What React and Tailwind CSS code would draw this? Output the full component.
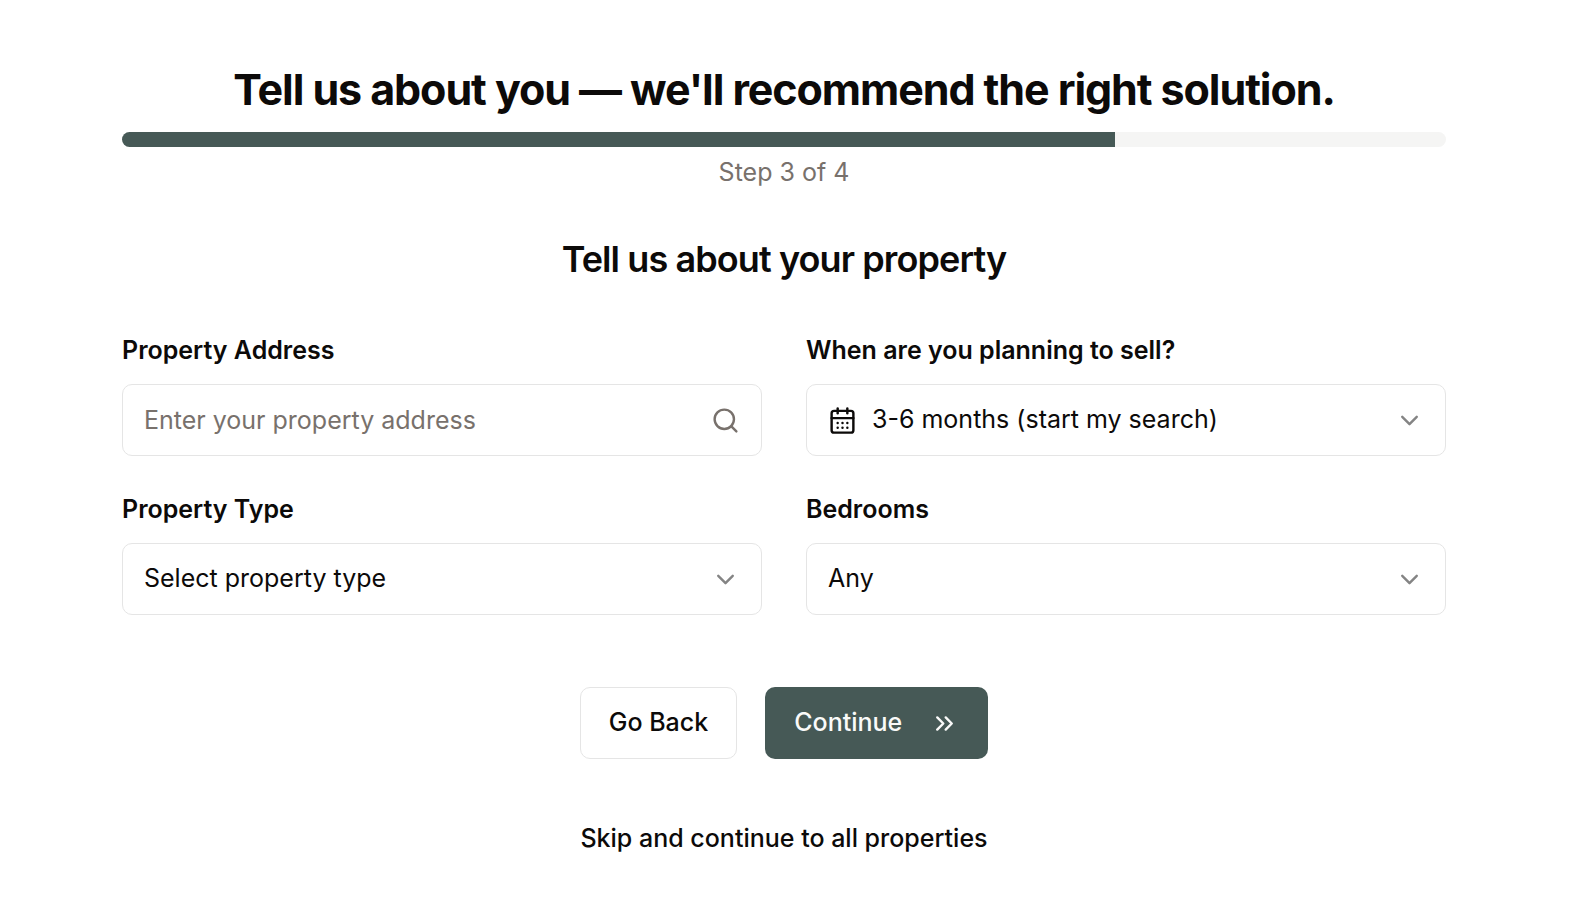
import { useState } from "react";
import { CalendarDays, ChevronDown, ChevronsRight, Search } from "lucide-react";

const control =
  "block h-18 w-full appearance-none rounded-[10px] border border-[#e5e5e5] bg-white text-[25px] text-[#0c0a09] outline-none placeholder:text-[#78716c]";

function SelectField({ id, label, options, icon: Icon }) {
  return (
    <div>
      <label htmlFor={id} className="block text-[25px] leading-9 font-semibold">
        {label}
      </label>
      <div className="relative mt-4">
        {Icon && (
          <Icon
            className="pointer-events-none absolute inset-y-0 left-[22px] my-auto size-[29px]"
            strokeWidth={2}
            aria-hidden="true"
          />
        )}
        <select id={id} className={`${control} pr-16 ${Icon ? "pl-[65px]" : "pl-[21px]"}`}>
          {options.map((o) => (
            <option key={o}>{o}</option>
          ))}
        </select>
        <ChevronDown
          className="pointer-events-none absolute inset-y-0 right-[22px] my-auto size-[29px] text-[#848484]"
          strokeWidth={2}
          aria-hidden="true"
        />
      </div>
    </div>
  );
}

export default function App() {
  const [address, setAddress] = useState("");
  return (
    <main className="min-h-screen bg-white pt-[63px] pr-[132px] pb-12 pl-[122px] font-['Inter',sans-serif] text-[#0c0a09]">
      <h1 className="text-center text-[43px] leading-[53px] font-bold tracking-tight">
        Tell us about you — we'll recommend the right solution.
      </h1>
      <div
        role="progressbar"
        aria-label="Form progress"
        aria-valuenow={75}
        aria-valuemin={0}
        aria-valuemax={100}
        className="mt-4 h-[15px] overflow-hidden rounded-full bg-[#f5f5f4]"
      >
        <div className="h-full w-3/4 bg-[#465956]" />
      </div>
      <p className="mt-[7px] text-center text-[25px] leading-9 text-[#78716c]">Step 3 of 4</p>

      <form onSubmit={(e) => e.preventDefault()}>
        <h2 className="mt-11 text-center text-4xl leading-[50px] font-semibold tracking-tight">
          Tell us about your property
        </h2>
        <div className="mt-12 grid grid-cols-2 gap-x-11 gap-y-[35px]">
          <div>
            <label htmlFor="address" className="block text-[25px] leading-9 font-semibold">
              Property Address
            </label>
            <div className="relative mt-4">
              <input
                id="address"
                type="text"
                value={address}
                onChange={(e) => setAddress(e.target.value)}
                placeholder="Enter your property address"
                className={`${control} pr-16 pl-[21px]`}
              />
              <Search
                className="pointer-events-none absolute inset-y-0 right-[22px] my-auto size-[29px] text-[#78716c]"
                strokeWidth={2}
                aria-hidden="true"
              />
            </div>
          </div>
          <SelectField
            id="timing"
            label="When are you planning to sell?"
            icon={CalendarDays}
            options={["3-6 months (start my search)", "6-12 months"]}
          />
          <SelectField id="type" label="Property Type" options={["Select property type", "House", "Apartment"]} />
          <SelectField id="bedrooms" label="Bedrooms" options={["Any", "1", "2", "3", "4"]} />
        </div>
        <div className="mt-18 flex justify-center gap-7">
          <button type="button" className="h-18 rounded-[10px] border border-[#e5e5e5] px-7 text-[25px] font-medium">
            Go Back
          </button>
          <button
            type="submit"
            className="flex h-18 items-center gap-7 rounded-[10px] bg-[#465956] px-[29px] text-[25px] font-medium text-[#fafaf9]"
          >
            Continue
            <ChevronsRight className="size-[29px]" strokeWidth={2} aria-hidden="true" />
          </button>
        </div>
        <div className="mt-[59px] flex justify-center">
          <button type="button" className="text-[25px] leading-10 font-medium">
            Skip and continue to all properties
          </button>
        </div>
      </form>
    </main>
  );
}
